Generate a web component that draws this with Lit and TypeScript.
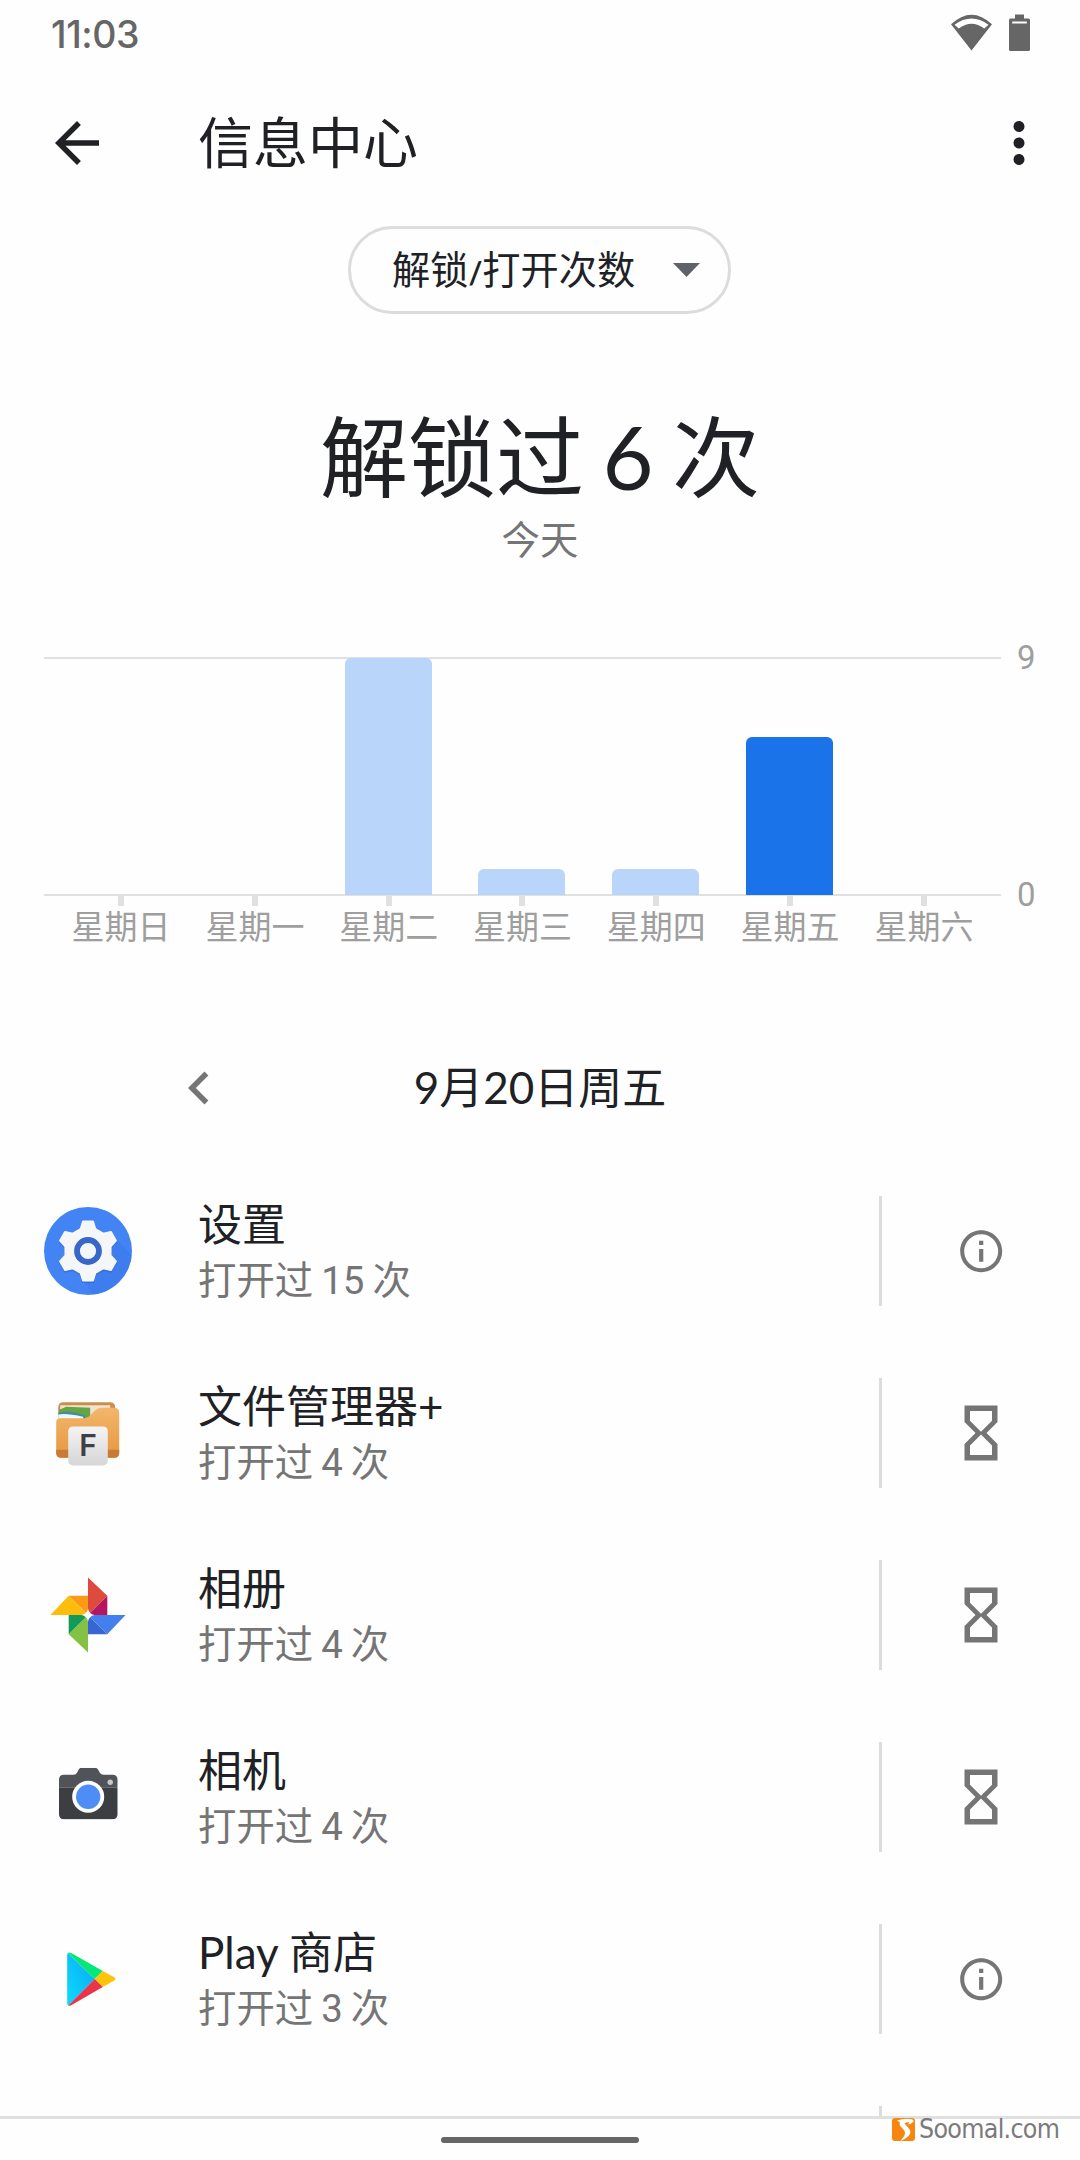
import { LitElement, html, svg, css, type TemplateResult } from "lit";
import { customElement, property } from "lit/decorators.js";
import { classMap } from "lit/directives/class-map.js";
import { styleMap } from "lit/directives/style-map.js";

interface Day { label: string; count: number; today?: boolean }
interface AppUsage { name: string; opens: number; icon: string; limit: boolean }

const MAX = 9;

const DAYS: Day[] = [
  { label: "星期日", count: 0 },
  { label: "星期一", count: 0 },
  { label: "星期二", count: 9 },
  { label: "星期三", count: 1 },
  { label: "星期四", count: 1 },
  { label: "星期五", count: 6, today: true },
  { label: "星期六", count: 0 },
];

const APPS: AppUsage[] = [
  { name: "设置", opens: 15, icon: "settings", limit: false },
  { name: "文件管理器+", opens: 4, icon: "files", limit: true },
  { name: "相册", opens: 4, icon: "photos", limit: true },
  { name: "相机", opens: 4, icon: "camera", limit: true },
  { name: "Play 商店", opens: 3, icon: "play", limit: false },
];

// Six-tooth gear outline centred on the origin.
const gearPath = (): string => {
  const tooth = [[-7.4, -21.8], [-5, -29.4], [5, -29.4], [7.4, -21.8]];
  const pts: string[] = [];
  for (let i = 0; i < 6; i++) {
    const a = (i * Math.PI) / 3;
    for (const [x, y] of tooth) {
      pts.push(`${(x * Math.cos(a) - y * Math.sin(a)).toFixed(2)} ${(x * Math.sin(a) + y * Math.cos(a)).toFixed(2)}`);
    }
  }
  return `M${pts.join("L")}Z`;
};

const ICONS: Record<string, TemplateResult> = {
  settings: svg`
    <defs><clipPath id="disc"><circle cx="44" cy="44" r="44"/></clipPath></defs>
    <circle cx="44" cy="44" r="44" fill="#4384f4"/>
    <g clip-path="url(#disc)"><path d="M65 25 96 56V96H52L40 72 62 60z" fill="#3b78e7" opacity=".55"/></g>
    <g transform="translate(44 45.4)"><path d=${gearPath()} fill="#2f62c4" stroke="#2f62c4" stroke-width="2.4" stroke-linejoin="round" opacity=".5"/></g>
    <g transform="translate(44 44)">
      <path d=${gearPath()} fill="#f5f6f7" stroke="#f5f6f7" stroke-width="2" stroke-linejoin="round"/>
      <circle r="11" fill="#f5f6f7" stroke="#3767c8" stroke-width="5.8"/>
    </g>`,
  files: svg`
    <defs>
      <linearGradient id="folder" x1="0" y1="0" x2="0" y2="1"><stop offset="0" stop-color="#f2b76b"/><stop offset="1" stop-color="#e6963f"/></linearGradient>
      <linearGradient id="tile" x1="0" y1="0" x2="0" y2="1"><stop offset="0" stop-color="#f4f4f4"/><stop offset="1" stop-color="#d6d6d6"/></linearGradient>
    </defs>
    <g transform="translate(12.200 12.800)">
      <path d="M2 6Q2 .5 7 .5H54Q59 .5 59 6V20H2z" fill="#cf8d4c"/>
      <path d="M4 3.500H54V18H4z" fill="#efe3d2"/>
      <path d="M3 8 10 5 34 6V16H3z" fill="#65a544"/>
      <path d="M2 11Q15 8 29 14V18H2z" fill="#3f8fa0"/>
      <path d="M2 12.600Q10 11 27 15V19H2z" fill="#eef7fb"/>
      <path d="M0 20Q0 16.500 4 16.500H28Q31 16.500 33.500 14L39 8.500Q41.500 6 45 6H58Q63 6 63 11V51Q63 56 58 56H5Q0 56 0 51z" fill="url(#folder)"/>
      <path d="M0 48H63V51Q63 56 58 56H5Q0 56 0 51z" fill="#c97b35"/>
      <rect x="12" y="24.600" width="39.600" height="39" rx="4.500" fill="url(#tile)"/>
      <text x="31.800" y="54.600" font-family="Inter, sans-serif" font-weight="600" font-size="30" text-anchor="middle" fill="#3f4043">F</text>
    </g>`,
  photos: svg`
    <g transform="translate(44 44)">
      <path d="M0-37.600 19.300-19.300 0 0z" fill="#df4a3e"/>
      <path d="M19.300-19.300V0H0z" fill="#b5175f"/>
      <path d="M37.600 0 19.300 19.300 0 0z" fill="#4380ee"/>
      <path d="M19.300 19.300H0V0z" fill="#3766d2"/>
      <path d="M0 37.600-19.300 19.300 0 0z" fill="#85c142"/>
      <path d="M-19.300 19.300V0H0z" fill="#149a58"/>
      <path d="M-37.600 0-19.300-19.300 0 0z" fill="#fdbd0c"/>
      <path d="M-19.300-19.300H0V0z" fill="#fb9a14"/>
      <path d="M0-6.500Q1-1 6.500 0 1 1 0 6.500-1 1-6.500 0-1-1 0-6.500z" fill="#fff"/>
    </g>`,
  camera: svg`
    <defs><clipPath id="body"><path d="M5 7H14.500Q17 7 18.300 4.500L19.500 2Q20.500 0 22.500 0H36Q38 0 39.200 2L40.500 4.500Q42 7 44.500 7H53.500Q58.500 7 58.500 12V46.500Q58.500 51.500 53.500 51.500H5Q0 51.500 0 46.500V12Q0 7 5 7z"/></clipPath></defs>
    <g transform="translate(15 14.800)">
      <g clip-path="url(#body)"><path d="M0 0H59V20H0z" fill="#505357"/><path d="M0 20H59V52H0z" fill="#3d3e41"/></g>
      <circle cx="29.200" cy="29" r="16" fill="#fff"/><circle cx="29.200" cy="29" r="12.200" fill="#4e8df6"/>
      <circle cx="51.200" cy="14.500" r="2.700" fill="#c6c7c9"/>
    </g>`,
  play: svg`
    <defs><linearGradient id="cyan" x1="1" y1="0" x2="0" y2="1"><stop offset="0" stop-color="#0aa5f5"/><stop offset="1" stop-color="#0ddcfb"/></linearGradient></defs>
    <g transform="translate(23.200 17.200) scale(1 .966)">
      <path d="M.6.8 27.500 27.700 1 55.200Q0 54.600 0 53V2.800Q0 1.500.6.800z" fill="url(#cyan)"/>
      <path d="M.6.8Q1.800-.4 4 .8L35.600 19.400 27.500 27.700z" fill="#05e878"/>
      <path d="M35.600 19.400 47 26Q49.400 27.700 47 29.400L35.600 36 27.500 27.700z" fill="#fec409"/>
      <path d="M27.500 27.700 35.600 36 4 54.800Q2 56 1 55.200z" fill="#e9344a"/>
    </g>`,
};

const INFO = html`<svg class="info" viewBox="0 0 24 24"><path d="M11 7h2v2h-2zm0 4h2v6h-2zm1-9C6.480 2 2 6.480 2 12s4.480 10 10 10 10-4.480 10-10S17.520 2 12 2zm0 18.100c-4.470 0-8.100-3.630-8.100-8.100S7.530 3.900 12 3.900s8.100 3.630 8.100 8.100-3.630 8.100-8.100 8.100z"/></svg>`;
const HOURGLASS = html`<svg class="glass" viewBox="0 0 24 24"><path d="M6 2v6h.01L6 8.010 10 12l-4 4 .01.01H6V22h12v-5.990h-.01L18 16l-4-4 4-3.990-.01-.01H18V2H6zm10 14.500V20H8v-3.500l4-4 4 4zm-4-5l-4-4V4h8v3.500l-4 4z"/></svg>`;

@customElement("usage-chart")
export class UsageChart extends LitElement {
  @property({ attribute: false }) days: Day[] = [];

  static styles = css`
    :host { display: grid; grid-template-columns: 957px 1fr; padding: 0 0 0 44px; color: #9e9e9e; font: 33px/40px Roboto, "Noto Sans CJK SC", sans-serif; }
    .plot { height: 239px; box-sizing: border-box; padding: 0 1px 1px 0; display: grid; grid-template-columns: repeat(7, 133.800px); justify-content: center; align-items: end; justify-items: center; box-shadow: inset 0 2px #e0e0e0, inset 0 -2px #e0e0e0; }
    .bar { width: 87px; border-radius: 6px 6px 0 0; background: #bad5fa; }
    .today { background: #1a73e8; }
    .axis { display: flex; flex-direction: column; justify-content: space-between; margin: -19px 0 -19px 16px; }
    .days { display: grid; grid-template-columns: repeat(7, 133.800px); justify-content: center; }
    .day { display: flex; flex-direction: column; align-items: center; gap: 2px; }
    .tick { width: 6px; height: 10px; background: #e0e0e0; }
  `;

  render() {
    return html`
      <div class="plot">
        ${this.days.map((d) => html`<div class=${classMap({ bar: true, today: !!d.today })} style=${styleMap({ height: `${(d.count / MAX) * 237.5}px` })}></div>`)}
      </div>
      <div class="axis"><span>${MAX}</span><span>0</span></div>
      <div class="days">
        ${this.days.map((d) => html`<div class="day"><i class="tick"></i><span>${d.label}</span></div>`)}
      </div>`;
  }
}

@customElement("app-usage-row")
export class AppUsageRow extends LitElement {
  @property({ attribute: false }) app!: AppUsage;

  static styles = css`
    :host { display: flex; align-items: center; height: 182px; flex: none; padding-left: 44px; }
    .icon { width: 88px; height: 88px; margin-right: 66px; flex: none; }
    .text { flex: 1; display: flex; flex-direction: column; gap: 3px; }
    .name { font: 44px/56px Lato, "Noto Sans CJK SC", sans-serif; color: #202124; }
    .sub { font: 38.400px/52px Roboto, "Noto Sans CJK SC", sans-serif; color: #757575; word-spacing: -1.500px; }
    .rule { width: 3px; height: 110px; background: #dcdcdc; }
    .action { width: 198px; display: flex; justify-content: center; fill: #757575; }
    .info { width: 50.400px; height: 50.400px; }
    .glass { width: 66px; height: 66px; }
  `;

  render() {
    const a = this.app;
    if (!a) return html``;
    return html`
      <svg class="icon" viewBox="0 0 88 88">${ICONS[a.icon]}</svg>
      <div class="text"><div class="name">${a.name}</div><div class="sub">打开过 ${a.opens} 次</div></div>
      <div class="rule"></div>
      <div class="action">${a.limit ? HOURGLASS : INFO}</div>`;
  }
}

@customElement("app-root")
export class AppRoot extends LitElement {
  static styles = css`
    :host { display: flex; flex-direction: column; position: relative; width: 1080px; height: 2160px; overflow: hidden; background: #fefefe; color: #202124; font-family: Lato, "Noto Sans CJK SC", sans-serif; }
    .status { display: flex; align-items: flex-start; height: 88px; flex: none; box-sizing: border-box; padding: 14px 50px 0 51px; color: #666; fill: #666; }
    .clock { flex: 1; padding-top: 1px; font: 500 37.500px/40px Inter, Roboto, sans-serif; letter-spacing: -.4px; }
    .wifi { width: 41px; height: 37px; margin-right: 17px; }
    .battery { width: 21px; height: 37px; }
    .bar { display: flex; align-items: center; height: 110px; flex: none; padding: 0 28px 0 44px; fill: #202124; }
    .glyph { width: 66px; height: 66px; }
    .title { flex: 1; margin: -2px 0 0 88px; font-size: 55px; line-height: 80px; font-weight: 400; }
    .pill { align-self: center; display: flex; align-items: center; justify-content: space-between; box-sizing: border-box; width: 383px; height: 88px; margin: 28px 1px 0 0; padding: 0 28px 0 41px; border: 3px solid #dcdcdc; border-radius: 44px; font-size: 38.200px; line-height: 50px; flex: none; }
    .metric { padding-bottom: 3px; }
    .slash { font-size: 30px; font-weight: 700; line-height: 30px; }
    .caret { width: 27px; height: 14px; fill: #5f6368; }
    .hero { margin: 87px 0 0; text-align: center; font-size: 88px; line-height: 110px; font-weight: 400; word-spacing: -4px; }
    .when { margin-top: 3px; text-align: center; font-size: 38.400px; line-height: 50px; color: #757575; }
    .chart { margin-top: 93px; }
    .date { display: flex; align-items: center; height: 66px; margin: 107px 166px 39px; flex: none; fill: #757575; }
    .label { flex: 1; margin-right: 66px; text-align: center; font-size: 44px; line-height: 60px; padding-bottom: 2px; }
    .list { flex: 1; min-height: 0; overflow: hidden; display: flex; flex-direction: column; }
    .next { flex: none; width: 3px; height: 110px; margin: 36px 0 0 879px; background: #dcdcdc; }
    .nav { flex: none; height: 41px; border-top: 3px solid #e0e0e0; display: flex; justify-content: center; align-items: flex-start; }
    .handle { width: 198px; height: 6px; margin-top: 18px; border-radius: 3px; background: #666; }
    .mark { position: absolute; left: 892px; top: 2113px; display: flex; align-items: center; gap: 4px; height: 32px; font: 26.500px/32px "DejaVu Sans Condensed", "DejaVu Sans", sans-serif; font-stretch: condensed; color: #7b7b7b; letter-spacing: -.7px; }
    .logo { width: 23px; height: 23px; }
  `;

  render() {
    return html`
      <div class="status">
        <span class="clock">11:03</span>
        <svg class="wifi" viewBox="0 0 41 37"><path fill-rule="evenodd" d="M0 10.300Q20.500-9 41 10.300L20.500 36.500zM3.500 10.800 7.700 14.600Q20.500 5 33.300 14.600L37.500 10.800Q20.500-1.600 3.500 10.800z"/></svg>
        <svg class="battery" viewBox="0 0 21 37"><path fill-rule="evenodd" d="M6 .5h9V4.500h4.500q1.500 0 1.500 1.500V35.500q0 1.500-1.500 1.500h-18Q0 37 0 35.500V6Q0 4.500 1.500 4.500H6zM3.200 7.600v2h14.600v-2z"/></svg>
      </div>
      <div class="bar">
        <svg class="glyph" viewBox="0 0 24 24"><path d="M20 11H7.830l5.590-5.590L12 4l-8 8 8 8 1.410-1.410L7.830 13H20v-2z"/></svg>
        <h1 class="title">信息中心</h1>
        <svg class="glyph" viewBox="0 0 24 24"><path d="M12 8c1.100 0 2-.9 2-2s-.9-2-2-2-2 .9-2 2 .9 2 2 2zm0 2c-1.100 0-2 .9-2 2s.9 2 2 2 2-.9 2-2-.9-2-2-2zm0 6c-1.100 0-2 .9-2 2s.9 2 2 2 2-.9 2-2-.9-2-2-2z"/></svg>
      </div>
      <div class="pill"><span class="metric">解锁<span class="slash">/</span>打开次数</span><svg class="caret" viewBox="0 0 27 14"><path d="M0 0h27L13.500 14z"/></svg></div>
      <h2 class="hero">解锁过 6 次</h2>
      <div class="when">今天</div>
      <usage-chart class="chart" .days=${DAYS}></usage-chart>
      <div class="date">
        <svg class="glyph" viewBox="0 0 24 24"><path d="M15.410 7.410 14 6l-6 6 6 6 1.410-1.410L10.830 12z"/></svg>
        <span class="label">9月20日周五</span>
      </div>
      <div class="list">
        ${APPS.map((a) => html`<app-usage-row .app=${a}></app-usage-row>`)}
        <div class="next"></div>
      </div>
      <div class="nav"><div class="handle"></div></div>
      <div class="mark">
        <svg class="logo" viewBox="0 0 23 23"><rect width="23" height="23" rx="3" fill="#f6860f"/><path d="M5 2.500Q12 0 20 1.200L22 3Q19 6.500 16 6.500L17.500 4.200Q14 4 12.500 5.500L17 10.500Q20 14.500 16 18.500 13 21.500 8.500 23 12.500 18 13 15.500 13.400 13 10.500 10.500 6.500 7 8 4.500z" fill="#fff"/></svg>
        <span>Soomal.com</span>
      </div>`;
  }
}
